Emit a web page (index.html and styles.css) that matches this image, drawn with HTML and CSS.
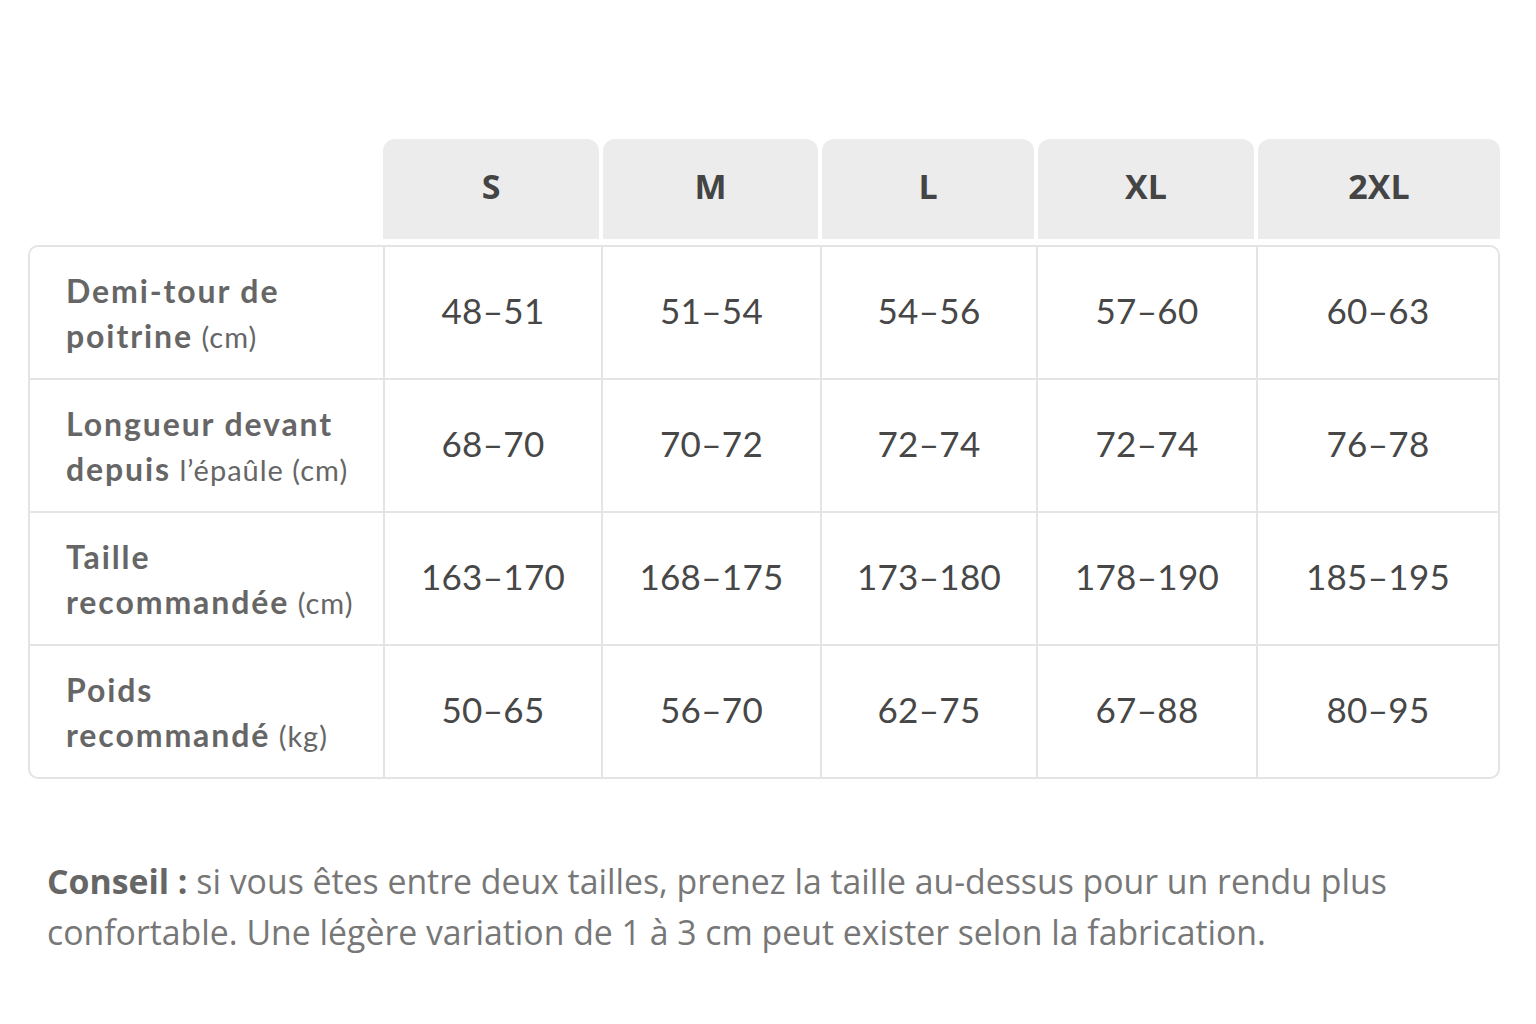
FILE: index.html
```html
<!DOCTYPE html>
<html lang="fr">
<head>
<meta charset="utf-8">
<link rel="stylesheet" href="styles.css">
</head>
<body>
<main class="page">
  <div class="heads">
    <div class="spacer"></div>
    <div class="head">S</div>
    <div class="head">M</div>
    <div class="head">L</div>
    <div class="head">XL</div>
    <div class="head">2XL</div>
  </div>
  <div class="table">
    <div class="row">
      <div class="label"><b>Demi-tour de<br>poitrine</b> (cm)</div>
      <div class="val">48–51</div><div class="val">51–54</div><div class="val">54–56</div><div class="val">57–60</div><div class="val">60–63</div>
    </div>
    <div class="row">
      <div class="label"><b>Longueur devant<br>depuis</b> l’épaûle (cm)</div>
      <div class="val">68–70</div><div class="val">70–72</div><div class="val">72–74</div><div class="val">72–74</div><div class="val">76–78</div>
    </div>
    <div class="row">
      <div class="label"><b>Taille<br>recommandée</b> (cm)</div>
      <div class="val">163–170</div><div class="val">168–175</div><div class="val">173–180</div><div class="val">178–190</div><div class="val">185–195</div>
    </div>
    <div class="row">
      <div class="label"><b>Poids<br>recommandé</b> (kg)</div>
      <div class="val">50–65</div><div class="val">56–70</div><div class="val">62–75</div><div class="val">67–88</div><div class="val">80–95</div>
    </div>
  </div>
  <p class="tip"><b>Conseil :</b> si vous êtes entre deux tailles, prenez la taille au-dessus pour un rendu plus<br>confortable. Une légère variation de 1 à 3 cm peut exister selon la fabrication.</p>
</main>
</body>
</html>
```

FILE: styles.css
```css
html, body {
  margin: 0;
  padding: 0;
  background: #ffffff;
}
body {
  font-family: Lato, "Open Sans", sans-serif;
  color: #444;
}
.page {
  padding: 139px 36px 0 28px;
}
.heads, .row {
  display: grid;
  grid-template-columns: 353px 218px 219px 216px 220px 242px;
}
.heads {
  grid-template-columns: 355px 218px 219px 216px 220px 244px;
  height: 100px;
  margin-bottom: 6px;
}
.head {
  background: #ececed;
  border-radius: 12px 12px 0 0;
  margin: 0 2px;
  display: flex;
  align-items: center;
  justify-content: center;
  padding-bottom: 6px;
  font-family: "Open Sans", Lato, sans-serif;
  font-weight: 700;
  font-size: 34px;
  color: #444;
}
.head:nth-child(2) { margin-left: 0; }
.head:last-child { margin-right: 0; }
.table {
  border: 2px solid #e4e4e4;
  border-radius: 10px;
  width: 1468px;
  overflow: hidden;
}
.row {
  height: 131px;
  border-top: 2px solid #e4e4e4;
}
.row:first-child { border-top: none; }
.label {
  padding: 22px 4px 0 36px;
  font-size: 29px;
  line-height: 44px;
  color: #666;
  font-weight: 400;
  letter-spacing: 1px;
  white-space: nowrap;
}
.label b {
  font-weight: 700;
  color: #666;
  font-size: 32px;
  letter-spacing: 1.9px;
}
.val {
  border-left: 2px solid #e4e4e4;
  display: flex;
  align-items: center;
  justify-content: center;
  padding-bottom: 6px;
  font-size: 35px;
  color: #474747;
  letter-spacing: 0.3px;
}
.tip {
  margin: 77px 0 0 19px;
  font-family: "Open Sans", Lato, sans-serif;
  font-size: 33.8px;
  line-height: 51px;
  color: #777;
  white-space: nowrap;
}
.tip b {
  color: #666;
  font-weight: 700;
}
```
